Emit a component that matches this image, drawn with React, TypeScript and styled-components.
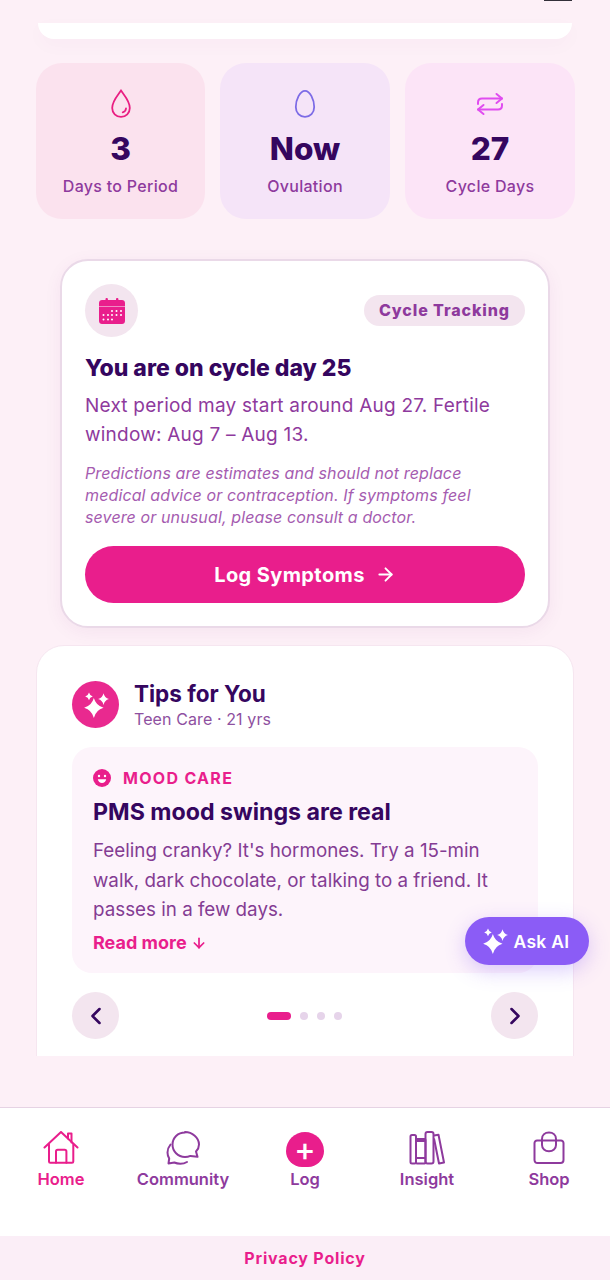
import React from 'react';
import styled, { createGlobalStyle } from 'styled-components';
import { ArrowRight, ArrowDown, ChevronLeft, ChevronRight } from 'lucide-react';

const GlobalStyle = createGlobalStyle`
  html, body {
    margin: 0;
    padding: 0;
    background: #fdf0f7;
  }
  * { box-sizing: border-box; }
`;

const stats = [
  { tone: '#fbe2ee', value: '3', label: 'Days to Period', icon: 'drop' },
  { tone: '#f5e4f8', value: 'Now', label: 'Ovulation', icon: 'egg' },
  { tone: '#fce4f7', value: '27', label: 'Cycle Days', icon: 'repeat' },
];

const DropIcon = () => (
  <svg width="24" height="30" viewBox="0 0 24 30" fill="none" stroke="#e91e82" strokeWidth="1.8">
    <path d="M12 1.600C8.600 6.600 3.200 12 3.200 19 3.200 24 7 27.800 12 27.800s8.800-3.800 8.800-8.800C20.800 12 15.400 6.600 12 1.600Z" />
    <path d="M17 19.500c-.2 2-1.300 3.300-3.300 3.800" strokeLinecap="round" />
  </svg>
);

const EggIcon = () => (
  <svg width="24" height="30" viewBox="0 0 24 30" fill="none" stroke="#7c6be6" strokeWidth="1.8">
    <path d="M12 1.800C7 1.800 2.800 10.600 2.800 18 2.800 23.800 6.800 27.800 12 27.800s9.200-4 9.200-9.800C21.200 10.600 17 1.800 12 1.800Z" />
  </svg>
);

const RepeatIcon = () => (
  <svg width="28" height="24" viewBox="0 0 28 24" fill="none" stroke="#e04cf0" strokeWidth="2" strokeLinecap="round" strokeLinejoin="round">
    <path d="M2 12v-1.500C2 8 3.800 6.500 6 6.500h20" />
    <path d="m20.500 2 5.500 4.500-5.500 4.500" />
    <path d="M26 12v1.500c0 2.500-1.800 4-4 4H2" />
    <path d="M7.500 13 2 17.500 7.500 22" />
  </svg>
);

const CalendarIcon = () => (
  <svg width="28" height="28" viewBox="0 0 28 28" fill="#e91e8c">
    <rect x="7.500" y="1" width="2.400" height="4" rx="1" />
    <rect x="18" y="1" width="2.400" height="4" rx="1" />
    <path d="M1 6c0-1.700 1.300-3 3-3h20c1.700 0 3 1.300 3 3v3.300H1V6Z" />
    <path d="M1 9.800h26V24c0 1.700-1.300 3-3 3H4c-1.700 0-3-1.300-3-3V9.800Z" />
    <g fill="#fff">
      <circle cx="14" cy="14" r="1" /><circle cx="18.500" cy="14" r="1" /><circle cx="23" cy="14" r="1" />
      <circle cx="5.500" cy="18" r="1" /><circle cx="10" cy="18" r="1" /><circle cx="14" cy="18" r="1" /><circle cx="18.500" cy="18" r="1" /><circle cx="23" cy="18" r="1" />
      <circle cx="5.500" cy="22.500" r="1" /><circle cx="10" cy="22.500" r="1" /><circle cx="14" cy="22.500" r="1" />
    </g>
  </svg>
);

const SparkIcon = ({ size }: { size: number }) => (
  <svg width={size} height={size} viewBox="0 0 26 26" fill="#fff">
    <path d="M11 6.500Q12.800 13.400 20 15.500 12.800 17.600 11 25 9.200 17.600 2 15.500 9.200 13.400 11 6.500Z" />
    <path d="M20 2Q20.900 6.300 25 7.500 20.900 8.700 20 13 19.100 8.700 15 7.500 19.100 6.300 20 2Z" />
    <path d="M6.500 1.500Q7.100 4.300 10 5 7.100 5.700 6.500 8.500 5.900 5.700 3 5 5.900 4.300 6.500 1.500Z" />
  </svg>
);

const SmileIcon = () => (
  <svg width="18" height="18" viewBox="0 0 18 18">
    <circle cx="9" cy="9" r="9" fill="#e91e8c" />
    <circle cx="6" cy="7" r="1.200" fill="#fff" />
    <circle cx="12" cy="7" r="1.200" fill="#fff" />
    <path d="M4.800 10.200h8.400c-.4 2.400-2.100 3.800-4.200 3.800s-3.800-1.400-4.200-3.800Z" fill="#fff" />
  </svg>
);

const HomeIcon = () => (
  <svg width="36" height="34" viewBox="0 0 36 34" fill="none" stroke="#e91e8c" strokeWidth="2" strokeLinejoin="round" strokeLinecap="round">
    <path d="M1.500 16.500 18 1l16.500 15.500" />
    <path d="M25 7.500V2.500h3.500v9" />
    <path d="M6 13.500v17c0 .8.500 1.300 1.300 1.300H29c.8 0 1.300-.5 1.300-1.300v-17" />
    <path d="M13 31.800V20.500c0-1 .7-1.700 1.700-1.700h7c1 0 1.700.7 1.700 1.700v11.300" />
  </svg>
);

const ChatIcon = () => (
  <svg width="34" height="34" viewBox="0 0 34 34" fill="none" stroke="#8e3a9d" strokeWidth="2" strokeLinejoin="round" strokeLinecap="round">
    <path d="M19 1.500C11.800 1.500 6.500 6.800 6.500 13.500S11.800 26 19 26c2 0 3.800-.4 5.400-1.100l7.100.9-1.500-5.300c2-2.100 3-4.500 3-7 0-6.700-6.800-12.500-14-12.500Z" />
    <path d="M4.500 13.500C2.500 16 1.500 18.500 1.500 21.500c0 2.300.6 4.200 1.700 6L2.500 32.500l5.800-1c1.800.8 3.800 1.200 6 1.200 2.500 0 4.800-.6 6.700-1.700" />
  </svg>
);

const BooksIcon = () => (
  <svg width="36" height="34" viewBox="0 0 36 34" fill="none" stroke="#8e3a9d" strokeWidth="2" strokeLinejoin="round">
    <rect x="1.500" y="4" width="5.500" height="28.500" rx="1.500" />
    <path d="M7 10h9.500M7 27h9.500" />
    <rect x="7" y="8" width="9.500" height="24.500" rx="1" />
    <rect x="16.500" y="1" width="8" height="31.500" rx="2" />
    <path d="m25 4.500 4.500-.7 5.500 27.700-5 1-5-25" />
  </svg>
);

const BagIcon = () => (
  <svg width="32" height="34" viewBox="0 0 32 34" fill="none" stroke="#8e3a9d" strokeWidth="2" strokeLinecap="round">
    <path d="M4 9.500h24c1.300 0 2.500 1.200 2.500 2.500v17c0 1.800-1.200 3-3 3h-23c-1.800 0-3-1.200-3-3V12c0-1.300 1.200-2.500 2.500-2.500Z" />
    <path d="M9 9.500V8c0-4 3-6.500 7-6.500S23 4 23 8v1.500" />
    <path d="M9 9.500V14c0 3.600 3 6.300 7 6.300s7-2.700 7-6.300V9.500" />
  </svg>
);

const StatIcon = ({ name }: { name: string }) => {
  if (name === 'drop') return <DropIcon />;
  if (name === 'egg') return <EggIcon />;
  return <RepeatIcon />;
};

const App: React.FC = () => (
  <Page>
    <GlobalStyle />
    <Notch />
    <Scroll>
      <TopCard />
      <StatRow>
        {stats.map((stat) => (
          <StatCard key={stat.label} $tone={stat.tone}>
            <StatIconSlot><StatIcon name={stat.icon} /></StatIconSlot>
            <StatValue>{stat.value}</StatValue>
            <StatLabel>{stat.label}</StatLabel>
          </StatCard>
        ))}
      </StatRow>
      <CycleCard>
        <CycleHead>
          <CalendarBubble><CalendarIcon /></CalendarBubble>
          <Chip>Cycle Tracking</Chip>
        </CycleHead>
        <CycleTitle>You are on cycle day 25</CycleTitle>
        <CycleText>Next period may start around Aug 27. Fertile window: Aug 7 – Aug 13.</CycleText>
        <Disclaimer>
          Predictions are estimates and should not replace medical advice or contraception. If symptoms feel severe or unusual, please consult a doctor.
        </Disclaimer>
        <LogButton>
          Log Symptoms
          <ArrowRight size={21} strokeWidth={2.200} />
        </LogButton>
      </CycleCard>
      <TipsCard>
        <TipsHead>
          <SparkBubble><SparkIcon size={28} /></SparkBubble>
          <div>
            <TipsTitle>Tips for You</TipsTitle>
            <TipsSub>Teen Care · 21 yrs</TipsSub>
          </div>
        </TipsHead>
        <TipPanel>
          <TipTag><SmileIcon />MOOD CARE</TipTag>
          <TipTitle>PMS mood swings are real</TipTitle>
          <TipText>Feeling cranky? It's hormones. Try a 15-min walk, dark chocolate, or talking to a friend. It passes in a few days.</TipText>
          <ReadMore>Read more <ArrowDown size={16} strokeWidth={2.600} /></ReadMore>
        </TipPanel>
        <Pager>
          <RoundButton><ChevronLeft size={28} strokeWidth={2.200} /></RoundButton>
          <Dots>
            <Dot $active />
            <Dot />
            <Dot />
            <Dot />
          </Dots>
          <RoundButton><ChevronRight size={28} strokeWidth={2.200} /></RoundButton>
        </Pager>
      </TipsCard>
    </Scroll>
    <AskAi><SparkIcon size={28} />Ask AI</AskAi>
    <NavBar>
      <NavItem $active><NavIconSlot><HomeIcon /></NavIconSlot>Home</NavItem>
      <NavItem><NavIconSlot><ChatIcon /></NavIconSlot>Community</NavItem>
      <NavItem>
        <NavIconSlot><PlusCircle>+</PlusCircle></NavIconSlot>
        Log
      </NavItem>
      <NavItem><NavIconSlot><BooksIcon /></NavIconSlot>Insight</NavItem>
      <NavItem><NavIconSlot><BagIcon /></NavIconSlot>Shop</NavItem>
    </NavBar>
    <Footer>Privacy Policy</Footer>
  </Page>
);

export default App;

const Page = styled.div`
  position: relative;
  display: flex;
  flex-direction: column;
  width: 610px;
  height: 1280px;
  overflow: hidden;
  background: #fdf0f7;
  font-family: Inter, 'Liberation Sans', sans-serif;
`;

const Notch = styled.div`
  position: absolute;
  top: 0;
  left: 544px;
  width: 28px;
  height: 1px;
  background: #33303a;
`;

const Scroll = styled.main`
  flex: none;
  height: 1056px;
  margin-bottom: 51px;
  padding: 23px 36px 0;
  overflow: hidden;
  display: flex;
  flex-direction: column;
`;

const TopCard = styled.div`
  flex: none;
  height: 16px;
  margin: 0 2px;
  background: #fff;
  border-radius: 0 0 20px 20px;
  box-shadow: 0 6px 18px rgba(120, 40, 120, 0.03);
`;

const StatRow = styled.section`
  flex: none;
  display: grid;
  grid-template-columns: 169px 170px 170px;
  column-gap: 15px;
  margin-top: 24px;
`;

const StatCard = styled.div<{ $tone: string }>`
  display: flex;
  flex-direction: column;
  align-items: center;
  height: 156px;
  padding-top: 26px;
  background: ${(p) => p.$tone};
  border-radius: 26px;
`;

const StatIconSlot = styled.div`
  display: flex;
  align-items: center;
  justify-content: center;
  height: 30px;
`;

const StatValue = styled.div`
  margin-top: 10px;
  font-size: 31.500px;
  line-height: 40px;
  font-weight: 800;
  color: #35065f;
`;

const StatLabel = styled.div`
  margin-top: 7px;
  font-size: 16px;
  line-height: 20px;
  font-weight: 500;
  letter-spacing: 0.3px;
  color: #8e3a9d;
`;

const CycleCard = styled.section`
  flex: none;
  width: 490px;
  height: 369px;
  margin: 40px 0 0 24px;
  padding: 23px 23px 0;
  background: #fff;
  border: 2px solid #ead9e8;
  border-radius: 28px;
  box-shadow: 0 4px 18px rgba(120, 40, 120, 0.06);
`;

const CycleHead = styled.div`
  display: flex;
  align-items: center;
  justify-content: space-between;
`;

const CalendarBubble = styled.div`
  display: flex;
  align-items: center;
  justify-content: center;
  width: 53px;
  height: 53px;
  border-radius: 50%;
  background: #f3e5ef;
`;

const Chip = styled.div`
  height: 31px;
  padding: 0 15px;
  font-size: 16px;
  line-height: 31px;
  font-weight: 800;
  letter-spacing: 0.9px;
  color: #8e3a9d;
  background: #f3e5ef;
  border-radius: 16px;
`;

const CycleTitle = styled.h2`
  margin: 16px 0 0;
  font-size: 23px;
  line-height: 30px;
  font-weight: 800;
  color: #35065f;
`;

const CycleText = styled.p`
  margin: 8px 0 0;
  font-size: 19px;
  line-height: 29px;
  font-weight: 400;
  letter-spacing: 0.22px;
  color: #8e3a9d;
`;

const Disclaimer = styled.p`
  margin: 13px 40px 0 0;
  font-size: 16px;
  line-height: 22px;
  font-style: italic;
  letter-spacing: 0.12px;
  color: #a55cb0;
`;

const LogButton = styled.button`
  display: flex;
  align-items: center;
  justify-content: center;
  gap: 10px;
  width: 100%;
  height: 57px;
  margin-top: 18px;
  border: none;
  border-radius: 29px;
  background: #e91e8c;
  color: #fff;
  font-family: inherit;
  font-size: 20px;
  font-weight: 700;
  letter-spacing: 0.4px;
`;

const TipsCard = styled.section`
  flex: none;
  width: 538px;
  height: 440px;
  margin: 17px 0 0;
  padding: 35px 35px 0;
  background: #fff;
  border: 1px solid #f6e6f0;
  border-radius: 28px;
`;

const TipsHead = styled.div`
  display: flex;
  align-items: center;
  gap: 15px;
  height: 47px;
`;

const SparkBubble = styled.div`
  display: flex;
  align-items: center;
  justify-content: center;
  width: 47px;
  height: 47px;
  border-radius: 50%;
  background: #e9298f;
`;

const TipsTitle = styled.div`
  font-size: 22.500px;
  line-height: 28px;
  font-weight: 700;
  color: #35065f;
`;

const TipsSub = styled.div`
  font-size: 16px;
  line-height: 22px;
  letter-spacing: 0.1px;
  color: #8e50a0;
`;

const TipPanel = styled.div`
  height: 226px;
  margin-top: 19px;
  padding: 20px 21px 0;
  background: #fdf4fb;
  border-radius: 20px;
`;

const TipTag = styled.div`
  display: flex;
  align-items: center;
  gap: 12px;
  height: 22px;
  font-size: 16px;
  font-weight: 700;
  letter-spacing: 1.300px;
  color: #e91e8c;
`;

const TipTitle = styled.h3`
  margin: 7px 0 0;
  font-size: 23.200px;
  line-height: 32px;
  font-weight: 700;
  color: #35065f;
`;

const TipText = styled.p`
  margin: 8px 0 0;
  font-size: 18.800px;
  line-height: 29.500px;
  color: #843c93;
`;

const ReadMore = styled.div`
  display: flex;
  align-items: center;
  gap: 4px;
  margin-top: 6px;
  font-size: 18px;
  line-height: 24px;
  font-weight: 700;
  color: #e91e8c;
`;

const Pager = styled.div`
  display: flex;
  align-items: center;
  justify-content: space-between;
  margin-top: 19px;
`;

const RoundButton = styled.button`
  display: flex;
  align-items: center;
  justify-content: center;
  width: 47px;
  height: 47px;
  padding: 0;
  border: none;
  border-radius: 50%;
  background: #f3e5ef;
  color: #35065f;
`;

const Dots = styled.div`
  display: flex;
  align-items: center;
  gap: 9px;
  margin-right: 2px;
`;

const Dot = styled.span<{ $active?: boolean }>`
  width: ${(p) => (p.$active ? '24px' : '8px')};
  height: 8px;
  border-radius: 4px;
  background: ${(p) => (p.$active ? '#e91e8c' : '#e6d4ea')};
`;

const AskAi = styled.button`
  position: absolute;
  top: 917px;
  left: 465px;
  display: flex;
  align-items: center;
  justify-content: center;
  gap: 5px;
  width: 124px;
  height: 48px;
  padding: 0 4px 0 0;
  border: none;
  border-radius: 24px;
  background: #8b5cf6;
  color: #fff;
  font-family: inherit;
  font-size: 17.500px;
  font-weight: 600;
  letter-spacing: 0.3px;
  box-shadow: 0 6px 20px rgba(139, 92, 246, 0.3);
`;

const NavBar = styled.nav`
  flex: none;
  display: grid;
  grid-template-columns: repeat(5, 1fr);
  height: 129px;
  padding-top: 23px;
  background: #fff;
  border-top: 1px solid #e6d3e4;
`;

const NavItem = styled.div<{ $active?: boolean }>`
  display: flex;
  flex-direction: column;
  align-items: center;
  gap: 3px;
  font-size: 16.500px;
  line-height: 22px;
  font-weight: 600;
  color: ${(p) => (p.$active ? '#e91e8c' : '#8e3a9d')};
`;

const NavIconSlot = styled.div`
  display: flex;
  align-items: flex-start;
  justify-content: center;
  height: 34px;
`;

const PlusCircle = styled.div`
  display: flex;
  align-items: center;
  justify-content: center;
  flex: none;
  width: 38px;
  height: 35px;
  margin-top: 1px;
  border-radius: 19px 19px 16px 16px;
  background: #e91e8c;
  color: #fff;
  font-size: 32px;
  font-weight: 500;
  line-height: 36px;
`;

const Footer = styled.footer`
  flex: 1;
  display: flex;
  align-items: center;
  justify-content: center;
  background: #fbeef7;
  color: #e91e8c;
  font-size: 16px;
  font-weight: 700;
  letter-spacing: 0.8px;
`;
